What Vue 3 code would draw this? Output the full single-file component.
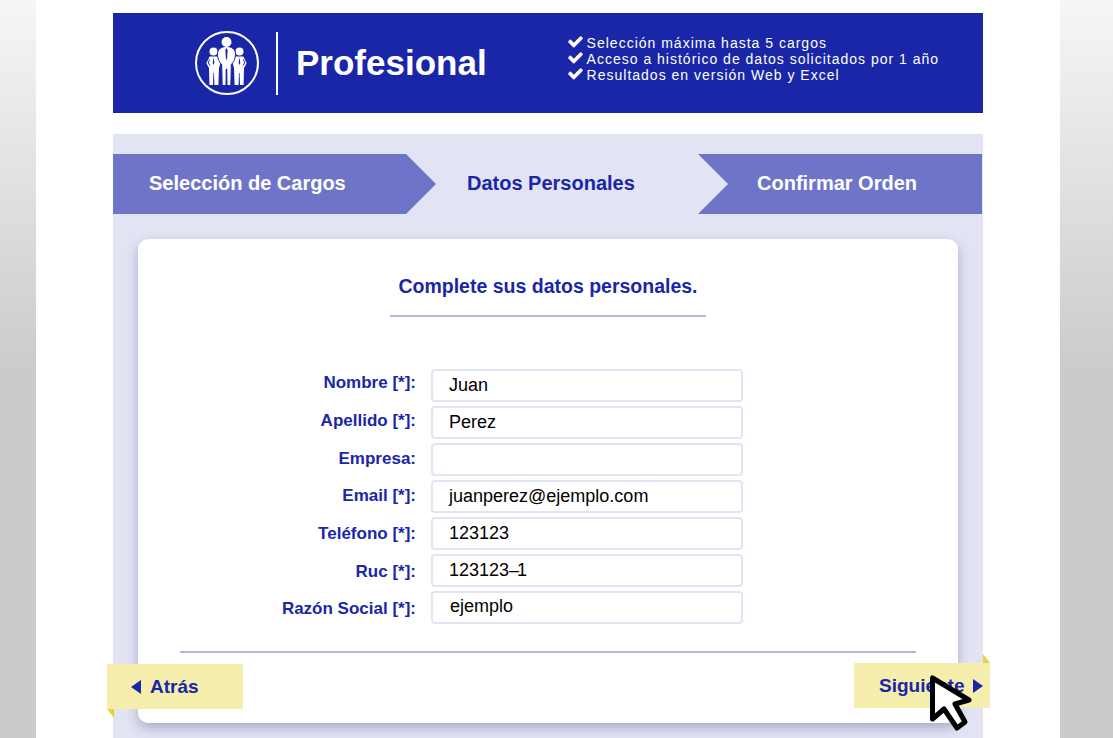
<script setup>
const fields = [
  { label: 'Nombre [*]:', value: 'Juan' },
  { label: 'Apellido [*]:', value: 'Perez' },
  { label: 'Empresa:', value: '' },
  { label: 'Email [*]:', value: 'juanperez@ejemplo.com' },
  { label: 'Teléfono [*]:', value: '123123' },
  { label: 'Ruc [*]:', value: '123123', tail: '1' },
  { label: 'Razón Social [*]:', value: 'ejemplo' }
]
const perks = [
  'Selección máxima hasta 5 cargos',
  'Acceso a histórico de datos solicitados por 1 año',
  'Resultados en versión Web y Excel'
]
</script>

<template>
  <div class="page">
    <div class="sheet">
      <header class="banner">
        <div class="brand">
          <svg class="logo" width="64" height="64" viewBox="0 0 64 64">
            <circle cx="32" cy="32" r="31" fill="none" stroke="#fff" stroke-width="2" />
            <g fill="#fff">
              <circle cx="18.5" cy="20.5" r="4" />
              <path d="M14.6 25.5 L22.4 25.5 L26 30 L24 37 L23.4 54 L19.4 54 L19 42 L18.4 42 L18 54 L14.4 54 L14 37 L11.4 32.2 Z" />
              <circle cx="44.5" cy="20.5" r="4" />
              <path d="M40.6 25.5 L48.4 25.5 L51.6 32.2 L49 37 L48.6 54 L45 54 L44.6 42 L44 42 L43.6 54 L39.6 54 L39 37 L37 30 Z" />
            </g>
            <g fill="none" stroke="#1a26a8" stroke-width="1">
              <path d="M14.5 28.5 L13.4 32 L15 34.5" />
              <path d="M48.5 28.5 L49.6 32 L48 34.5" />
            </g>
            <path d="M18.5 26 L17.7 32 L18.5 34 L19.3 32 Z M44.5 26 L43.7 32 L44.5 34 L45.3 32 Z" fill="#1a26a8" />
            <path d="M31.5 15.5 C26 15.5 22.5 18.5 22.5 23 C22.5 28 25 32 26.7 33.5 L27.2 54.5 L31 54.5 L31.2 38 L31.8 38 L32 54.5 L35.8 54.5 L36.3 33.5 C38 32 40.5 28 40.5 23 C40.5 18.5 37 15.5 31.5 15.5 Z" fill="#fff" stroke="#1a26a8" stroke-width="1" />
            <circle cx="31.5" cy="11" r="5" fill="#fff" />
            <path d="M31.5 17 L30.4 19 L30.9 27 L31.5 29.5 L32.1 27 L32.6 19 Z" fill="#1a26a8" />
          </svg>
          <span class="divider"></span>
          <span class="title">Profesional</span>
        </div>
        <ul class="perks">
          <li v-for="p in perks" :key="p">
            <svg width="17" height="17" viewBox="0 0 1792 1792"><path fill="#fff" d="M1671 566q0 40-28 68l-724 724-136 136q-28 28-68 28t-68-28l-136-136-362-362q-28-28-28-68t28-68l136-136q28-28 68-28t68 28l294 295 656-657q28-28 68-28t68 28l136 136q28 28 28 68z" /></svg>
            <span>{{ p }}</span>
          </li>
        </ul>
      </header>

      <main class="panel">
        <nav class="steps">
          <div class="step first">Selección de Cargos</div>
          <div class="step current">Datos Personales</div>
          <div class="step last">Confirmar Orden</div>
        </nav>

        <section class="card">
          <h2 class="heading">Complete sus datos personales.</h2>
          <form class="form">
            <div class="labels">
              <label v-for="f in fields" :key="f.label" class="label">{{ f.label }}</label>
            </div>
            <div class="inputs">
              <div v-for="f in fields" :key="f.label" class="input">{{ f.value }}<template v-if="f.tail"><span class="dash">–</span>{{ f.tail }}</template></div>
            </div>
          </form>
          <hr class="rule" />
          <div class="ribbon back">
            <span class="tri-left"></span>
            <span>Atrás</span>
          </div>
          <div class="ribbon next">
            <span>Siguiente</span>
            <span class="tri-right"></span>
          </div>
          <svg class="cursor" width="46" height="60" viewBox="0 0 46 60">
            <path d="M4.5 4 L4.5 45 L16 35 L29 54 L37 48 L27 30 L41 26 Z" fill="#fff" stroke="#000" stroke-width="5" stroke-linejoin="round" />
          </svg>
        </section>
      </main>
    </div>
  </div>
</template>

<style>
html, body { margin: 0; padding: 0; }
body { background: #ccc; }
</style>

<style scoped>
.page {
  height: 738px;
  overflow: hidden;
  background: linear-gradient(#f6f6f6 0, #cbcbcb 370px);
  font-family: "Liberation Sans", Arial, sans-serif;
}
.sheet {
  width: 870px;
  height: 725px;
  margin: 0 auto 0 36px;
  padding: 13px 77px 0;
  background: #fff;
}
.banner {
  height: 100px;
  background: #1a26a8;
  color: #fff;
  display: flex;
  align-items: center;
  padding-left: 82px;
  box-sizing: border-box;
}
.brand { display: flex; align-items: center; }
.logo { display: block; }
.divider { width: 2px; height: 63px; background: #fff; margin-left: 17px; }
.title { font-size: 35px; font-weight: 700; margin: 0 0 2px 18px; line-height: 61px; }
.perks {
  list-style: none;
  margin: 0 0 8px 80px;
  padding: 0;
  font-size: 14px;
  letter-spacing: 1px;
  line-height: 16px;
}
.perks li { display: flex; align-items: center; gap: 3px; height: 16px; white-space: nowrap; }
.perks li svg { margin-top: -3px; }
.panel {
  margin-top: 21px;
  height: 604px;
  padding-top: 20px;
  box-sizing: border-box;
  background: #e2e4f3;
}
.steps {
  display: grid;
  grid-template-columns: 323px 262px 284px;
  height: 60px;
  width: 869px;
}
.step {
  display: flex;
  align-items: center;
  padding-bottom: 2px;
  box-sizing: border-box;
  font-size: 20px;
  font-weight: 700;
  color: #fff;
}
.first {
  background: #6e75c8;
  clip-path: polygon(0 0, 293px 0, 100% 50%, 293px 100%, 0 100%);
  padding-left: 36px;
}
.current { color: #1a26a8; padding-left: 31px; }
.last {
  background: #6e75c8;
  clip-path: polygon(0 0, 100% 0, 100% 100%, 0 100%, 30px 50%);
  padding-left: 59px;
}
.card {
  position: relative;
  width: 820px;
  height: 484px;
  margin: 25px 0 0 25px;
  padding-top: 35px;
  box-sizing: border-box;
  background: #fff;
  border-radius: 10px;
  box-shadow: 0 5px 12px rgba(40, 44, 100, 0.3);
}
.heading {
  width: 316px;
  margin: 0 0 0 252px;
  padding-bottom: 17px;
  border-bottom: 2px solid #b2b5df;
  color: #1a26a8;
  font-size: 19.5px;
  font-weight: 700;
  line-height: 24px;
  text-align: center;
  white-space: nowrap;
}
.form { display: flex; margin-top: 47px; }
.labels { width: 278px; padding-top: 0.4px; display: flex; flex-direction: column; }
.label {
  height: 37.67px;
  line-height: 37.67px;
  text-align: right;
  color: #1a26a8;
  font-size: 17px;
  font-weight: 700;
}
.inputs {
  display: flex;
  flex-direction: column;
  gap: 4px;
  margin: 5px 0 0 15px;
}
.input {
  width: 312px;
  height: 33px;
  padding-left: 16px;
  box-sizing: border-box;
  border: 2px solid #e2e4f3;
  border-radius: 4px;
  color: #000;
  font-size: 18px;
  line-height: 29px;
}
.input:last-child { padding-left: 17px; line-height: 27px; }
.dash { letter-spacing: -2px; }
.rule {
  width: 736px;
  height: 2px;
  margin: 23px 0 0 42px;
  border: 0;
  background: #b2b5df;
}
.ribbon {
  position: absolute;
  display: flex;
  align-items: center;
  background: #f5eeac;
  color: #1a26a8;
  font-size: 19px;
  font-weight: 700;
}
.ribbon::after {
  content: "";
  position: absolute;
  width: 7px;
  height: 9px;
  background: #e6d334;
}
.back {
  left: -31px;
  top: 425px;
  width: 136px;
  height: 45px;
  padding-left: 24px;
  box-sizing: border-box;
  gap: 9px;
}
.back::after { left: 0; top: 100%; clip-path: polygon(0 0, 100% 0, 100% 100%); }
.next {
  right: -32px;
  top: 424px;
  width: 136px;
  height: 45px;
  padding-left: 25px;
  box-sizing: border-box;
  gap: 8px;
}
.next::after { right: 0; bottom: 100%; clip-path: polygon(0 0, 100% 100%, 0 100%); }
.tri-left {
  width: 0; height: 0;
  border-top: 7px solid transparent;
  border-bottom: 7px solid transparent;
  border-right: 10px solid #1a26a8;
}
.tri-right {
  width: 0; height: 0;
  border-top: 7px solid transparent;
  border-bottom: 7px solid transparent;
  border-left: 10px solid #1a26a8;
}
.cursor { position: absolute; left: 790px; top: 435px; }
</style>
